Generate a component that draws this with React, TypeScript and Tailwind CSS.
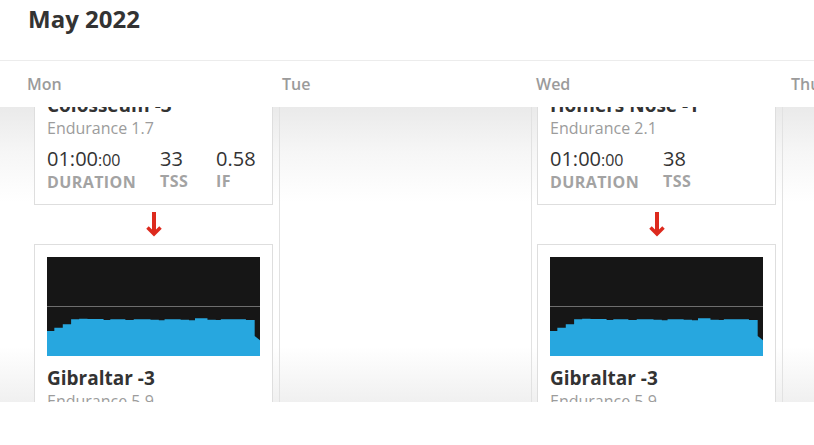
import React from 'react';

type Stat = { value: React.ReactNode; label: string };

const days = [
  { label: 'Mon', w: 'w-[255px]' },
  { label: 'Tue', w: 'w-[254px]' },
  { label: 'Wed', w: 'w-[255px]' },
  { label: 'Thu', w: 'w-[100px]' },
];

const statWidths = ['w-[113px]', 'w-[56px]', 'w-auto'];

function Duration() {
  return (
    <span>
      01:00<span className="text-[16px]">:00</span>
    </span>
  );
}

function Arrow() {
  return (
    <div className="w-[239px] h-[39px] flex items-center justify-center">
      <svg width="16" height="26" viewBox="0 0 16 26" fill="none" stroke="#dd2a1e">
        <path d="M8 0v22" strokeWidth="4" />
        <path d="M1.5 15.5 8 22l6.5-6.5" strokeWidth="3.5" />
      </svg>
    </div>
  );
}

function Chart() {
  const d =
    'M0,99 L0,74 H7.3 V70.7 H15.7 V67.3 H24 V62.3 H32 V61.7 H40.3 V62 H56.3 V63 H63 V62.3 H78 V63 H86.3 V62.3 H103 V62.7 H111.3 V63.3 H117 V62.3 H133 V62.7 H141.3 V63.3 H147.3 V61.3 H159.7 V62.7 H168 V63 H173 V62.3 H198 V63 H206.7 V79 L212,83.3 V99 Z';
  return (
    <div className="h-[99px] bg-[#161616]">
      <svg width="100%" height="99" viewBox="0 0 212 99" preserveAspectRatio="none">
        <line x1="0" y1="49.5" x2="212" y2="49.5" stroke="#6e6e6e" strokeWidth="1" />
        <path d={d} fill="#27a7df" />
      </svg>
    </div>
  );
}

function WorkoutCard({ title, sub, stats }: { title: string; sub: string; stats: Stat[] }) {
  return (
    <div className="w-[239px] bg-white border border-[#dedede] px-3 pt-3 pb-[13px]">
      <div className="text-[19px] leading-6 font-bold text-[#333]">{title}</div>
      <div className="text-[16px] leading-[22px] text-[#9c9c9c]">{sub}</div>
      <div className="mt-[7px] flex">
        {stats.map((s, i) => (
          <div key={s.label} className={`${statWidths[i]} shrink-0`}>
            <div className="text-[20px] leading-[26px] text-[#333]">{s.value}</div>
            <div className="text-[16px] leading-[18px] font-bold tracking-[0.4px] text-[#a3a3a3]">{s.label}</div>
          </div>
        ))}
      </div>
    </div>
  );
}

function ChartCard({ title, sub }: { title: string; sub: string }) {
  return (
    <div className="w-[239px] bg-white border border-[#dedede] px-3 pt-3 pb-3">
      <Chart />
      <div className="mt-[10px] text-[19px] leading-6 font-bold text-[#333]">{title}</div>
      <div className="text-[16px] leading-[22px] text-[#9c9c9c]">{sub}</div>
    </div>
  );
}

export default function App() {
  return (
    <div className="w-[814px] h-[445px] bg-white overflow-hidden font-['Open_Sans',sans-serif]">
      {/* Month */}
      <div className="h-[60px] pl-[28px] pt-[3px]">
        <h1 className="text-[24px] leading-8 font-bold text-[#333]">May 2022</h1>
      </div>

      {/* Weekdays */}
      <div className="h-[47px] border-t border-[#ececec] pl-[27px] pt-[11px] flex whitespace-nowrap">
        {days.map((d) => (
          <div key={d.label} className={`${d.w} shrink-0 text-[16px] leading-6 font-semibold text-[#9b9b9b]`}>
            {d.label}
          </div>
        ))}
      </div>

      {/* Week body */}
      <div className="h-[295px] overflow-hidden bg-[linear-gradient(to_bottom,#eaeaea_0px,#f6f6f6_45px,#ffffff_95px,#ffffff_240px,#f0f0f0_295px)]">
        <div className="-mt-[27px] pl-[28px] flex h-[400px]">
          <div className="w-[251px] shrink-0 border-l border-transparent pl-[5px]">
            <WorkoutCard
              title="Colosseum -3"
              sub="Endurance 1.7"
              stats={[
                { value: <Duration />, label: 'DURATION' },
                { value: '33', label: 'TSS' },
                { value: '0.58', label: 'IF' },
              ]}
            />
            <Arrow />
            <ChartCard title="Gibraltar -3" sub="Endurance 5.9" />
          </div>
          <div className="w-[252px] shrink-0 border-l border-[#e2e2e2]" />
          <div className="w-[251px] shrink-0 border-l border-[#e2e2e2] pl-[5px]">
            <WorkoutCard
              title="Homers Nose -1"
              sub="Endurance 2.1"
              stats={[
                { value: <Duration />, label: 'DURATION' },
                { value: '38', label: 'TSS' },
              ]}
            />
            <Arrow />
            <ChartCard title="Gibraltar -3" sub="Endurance 5.9" />
          </div>
          <div className="w-[60px] shrink-0 border-l border-[#e2e2e2]" />
        </div>
      </div>
    </div>
  );
}
